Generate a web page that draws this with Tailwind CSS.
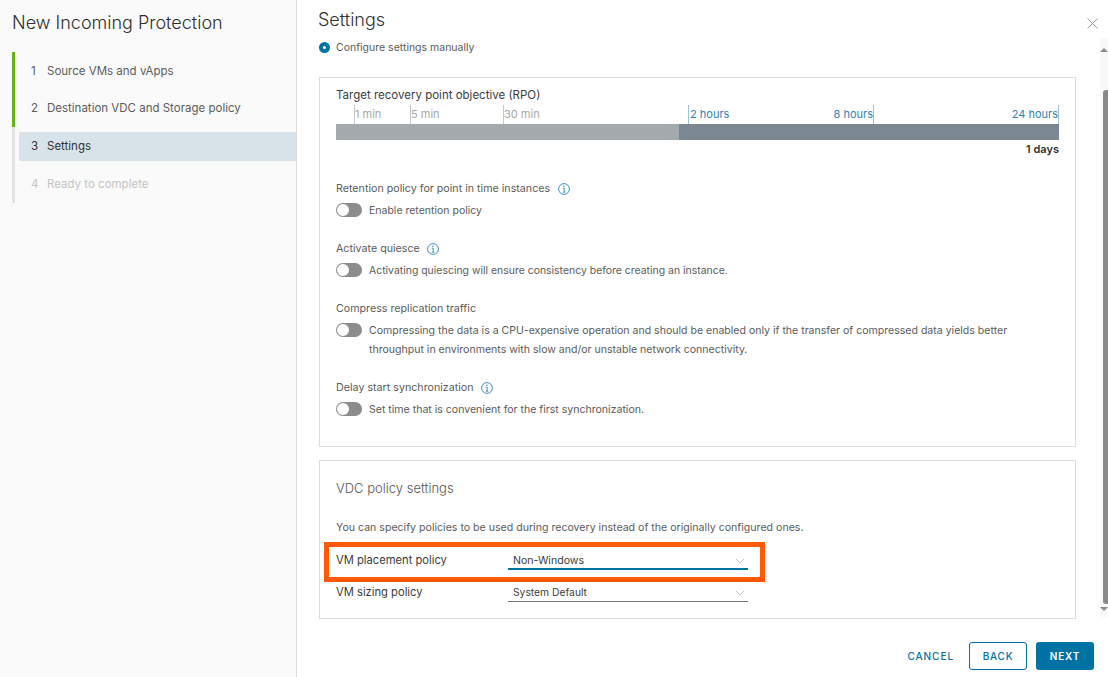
<!DOCTYPE html>
<html>
<head>
<meta charset="utf-8">
<script src="https://cdn.jsdelivr.net/npm/@tailwindcss/browser@4"></script>
</head>
<body class="m-0">
<div class="relative flex h-[677px] w-[1108px] overflow-hidden bg-white font-['Inter',sans-serif] text-[10.7px] text-[#5c5c5c]">
  <aside class="h-full w-[297px] shrink-0 border-r border-[#dcdcdc] bg-[#fafafa] pl-3">
    <h1 class="h-[52px] pt-[11px] text-[18px] font-light leading-6 text-[#313131]">New Incoming Protection</h1>
    <div class="flex text-[11.5px]">
      <div class="flex w-[3px] flex-col">
        <div class="h-[75px] bg-[#60b515]"></div>
        <div class="h-[76px] bg-[#e4e4e4]"></div>
      </div>
      <ol class="ml-1 flex-1 pt-px">
        <li class="flex h-[37px] items-center pl-3"><span class="w-4">1</span><span>Source VMs and vApps</span></li>
        <li class="flex h-[37px] items-center pl-3"><span class="w-4">2</span><span>Destination VDC and Storage policy</span></li>
        <li class="mb-[5px] mt-[5px] flex h-[29px] items-center rounded-l-[2px] bg-[#d8e3e9] pl-3 text-[#313131]"><span class="w-4">3</span><span>Settings</span></li>
        <li class="flex h-[37px] items-center pl-3 text-[#c4c4c4]"><span class="w-4">4</span><span>Ready to complete</span></li>
      </ol>
    </div>
  </aside>

  <main class="relative flex-1 pl-[21px] pr-8">
    <h2 class="h-[38px] pt-2 text-[18px] font-light leading-6 text-[#313131]">Settings</h2>
    <label class="ml-px flex h-[18px] items-center gap-[6px]">
      <span class="flex h-[11px] w-[11px] items-center justify-center rounded-full bg-[#0072a3]"><span class="h-[3px] w-[3px] rounded-full bg-white"></span></span>
      <span class="translate-y-px text-[10.5px]">Configure settings manually</span>
    </label>

    <section class="ml-px mt-[21px] h-[370px] w-[757px] border border-[#dcdcdc] px-4 pt-[9px]">
      <p class="text-[11.5px] leading-4 text-[#3d3d3d]">Target recovery point objective (RPO)</p>
      <div class="relative mt-[2px] h-[19px] w-[723px] text-[11px]">
        <span class="absolute left-[18px] top-0 h-[19px] border-l border-[#c8c8c8] leading-[19px] text-[#a8a8a8]">1 min</span>
        <span class="absolute left-[74px] top-0 h-[19px] border-l border-[#c8c8c8] leading-[19px] text-[#a8a8a8]">5 min</span>
        <span class="absolute left-[167px] top-0 h-[19px] border-l border-[#c8c8c8] leading-[19px] text-[#a8a8a8]">30 min</span>
        <span class="absolute left-[352px] top-0 h-[19px] border-l border-[#9fc0d3] pl-px leading-[19px] text-[#2f82b5]">2 hours</span>
        <span class="absolute right-[185px] top-0 h-[19px] border-r border-[#9fc0d3] leading-[19px] text-[#2f82b5]">8 hours</span>
        <span class="absolute right-0 top-0 h-[19px] border-r border-[#9fc0d3] leading-[19px] text-[#2f82b5]">24 hours</span>
      </div>
      <div class="flex h-4 w-[723px]">
        <div class="w-[343px] bg-[#a3a9ac]"></div>
        <div class="flex-1 bg-[#7b8792]"></div>
      </div>
      <p class="mt-[2px] w-[723px] text-right text-[11px] font-semibold leading-[14px] text-[#313131]">1 days</p>

      <div class="mt-[25px] flex h-4 items-center gap-[7px]"><span>Retention policy for point in time instances</span>
        <svg class="ml-[1px]" width="12" height="12" viewBox="0 0 12 12" fill="none" stroke="#2f82b5"><circle cx="6" cy="6" r="5.4" stroke-width=".9"/><path d="M4.8 5.2H6.2V9M4.8 9.2H7.4" stroke-width=".9"/><circle cx="5.9" cy="3.3" r=".7" fill="#2f82b5" stroke="none"/></svg>
      </div>
      <div class="mt-[5px] flex h-4 items-center gap-[7px] text-[10.5px]">
        <span class="flex h-[14px] w-[26px] shrink-0 items-center rounded-full bg-[#8c8c8c] pl-px"><span class="h-3 w-3 rounded-full bg-white"></span></span>
        <span class="translate-y-px">Enable retention policy</span>
      </div>

      <div class="mt-[23px] flex h-[16px] items-center gap-[6px]"><span>Activate quiesce</span>
        <svg class="ml-[1px]" width="12" height="12" viewBox="0 0 12 12" fill="none" stroke="#2f82b5"><circle cx="6" cy="6" r="5.4" stroke-width=".9"/><path d="M4.8 5.2H6.2V9M4.8 9.2H7.4" stroke-width=".9"/><circle cx="5.9" cy="3.3" r=".7" fill="#2f82b5" stroke="none"/></svg>
      </div>
      <div class="mt-[5px] flex h-4 items-center gap-[7px] text-[10.45px]">
        <span class="flex h-[14px] w-[26px] shrink-0 items-center rounded-full bg-[#8c8c8c] pl-px"><span class="h-3 w-3 rounded-full bg-white"></span></span>
        <span class="translate-y-px">Activating quiescing will ensure consistency before creating an instance.</span>
      </div>

      <div class="mt-[23px] flex h-[16px] items-center"><span>Compress replication traffic</span></div>
      <div class="mt-[5px] flex gap-[7px] text-[10.55px]">
        <span class="mt-px flex h-[14px] w-[26px] shrink-0 items-center rounded-full bg-[#8c8c8c] pl-px"><span class="h-3 w-3 rounded-full bg-white"></span></span>
        <span class="-mt-[1px] leading-[19px]">Compressing the data is a CPU-expensive operation and should be enabled only if the transfer of compressed data yields better<br>throughput in environments with slow and/or unstable network connectivity.</span>
      </div>

      <div class="mt-[21px] flex h-[16px] items-center gap-[6px]"><span>Delay start synchronization</span>
        <svg class="ml-[1px]" width="12" height="12" viewBox="0 0 12 12" fill="none" stroke="#2f82b5"><circle cx="6" cy="6" r="5.4" stroke-width=".9"/><path d="M4.8 5.2H6.2V9M4.8 9.2H7.4" stroke-width=".9"/><circle cx="5.9" cy="3.3" r=".7" fill="#2f82b5" stroke="none"/></svg>
      </div>
      <div class="mt-[5px] flex h-4 items-center gap-[7px] text-[10.55px]">
        <span class="flex h-[14px] w-[26px] shrink-0 items-center rounded-full bg-[#8c8c8c] pl-px"><span class="h-3 w-3 rounded-full bg-white"></span></span>
        <span class="translate-y-px">Set time that is convenient for the first synchronization.</span>
      </div>
    </section>

    <section class="ml-px mt-[13px] h-[159px] w-[757px] border border-[#dcdcdc] px-4 pt-[18px]">
      <h3 class="h-[18px] text-[13px] font-light leading-[18px] text-[#565656]">VDC policy settings</h3>
      <p class="mt-[23px] text-[10.6px] leading-4">You can specify policies to be used during recovery instead of the originally configured ones.</p>
      <div class="mt-[12px] flex h-[24px] text-[#3d3d3d]">
        <span class="w-[172px] self-center text-[11.2px]">VM placement policy</span>
        <div class="flex h-[22px] w-[240px] items-center justify-between border-b-2 border-[#0072a3] pl-[5px] pr-[3px] pt-[5px] text-[10.6px]"><span>Non-Windows</span>
          <svg width="10" height="6" viewBox="0 0 10 6" fill="none" stroke="#c4c4c4"><path d="M1 1L5 5L9 1"/></svg></div>
      </div>
      <div class="mt-[8px] flex h-[24px] text-[#3d3d3d]">
        <span class="w-[172px] self-center text-[11.2px]">VM sizing policy</span>
        <div class="flex h-[22px] w-[240px] items-center justify-between border-b border-[#7a7a7a] pl-[5px] pr-[3px] pt-[4px] text-[10.3px]"><span>System Default</span>
          <svg width="10" height="6" viewBox="0 0 10 6" fill="none" stroke="#c4c4c4"><path d="M1 1L5 5L9 1"/></svg></div>
      </div>
    </section>

    <div class="absolute left-[27px] top-[542px] h-[40px] w-[441px] border-[5px] border-[#ff5a00]"></div>

    <footer class="mt-[23px] flex h-7 w-[776px] items-center justify-end gap-[10px] text-[10px] font-medium tracking-[0.8px]">
      <button class="pr-[5px] tracking-[0.95px] text-[#0072a3]">CANCEL</button>
      <button class="h-7 w-[58px] rounded-[3px] border border-[#0072a3] text-[#0072a3]">BACK</button>
      <button class="ml-[-1px] h-7 w-[58px] rounded-[3px] bg-[#0072a3] font-semibold text-white">NEXT</button>
    </footer>

    <svg class="absolute left-[790px] top-[18px]" width="11" height="11" viewBox="0 0 11 11" stroke="#8e8e8e" stroke-width=".9"><path d="M.5.5L10.5 10.5M10.5.5L.5 10.5"/></svg>

    <div class="absolute left-[803px] top-[38px] flex h-[579px] w-2 flex-col items-end bg-[#f8f8f8]">
      <span class="mt-[10px] border-x-[4px] border-b-[4px] border-x-transparent border-b-[#8a8a8a]"></span>
      <div class="mt-[38px] h-[514px] w-[5px] rounded-l-[3px] bg-[#8a8a8a]"></div>
      <span class="mt-[3px] border-x-[4px] border-t-[4px] border-x-transparent border-t-[#8a8a8a]"></span>
    </div>
  </main>
</div>
</body>
</html>
